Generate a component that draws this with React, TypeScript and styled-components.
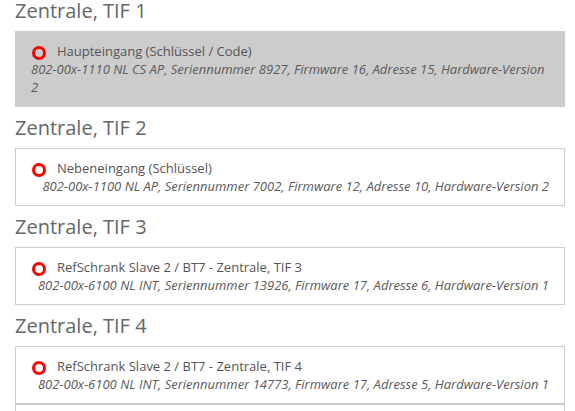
import * as React from "react";
import styled, { createGlobalStyle } from "styled-components";

const GlobalStyle = createGlobalStyle`
  html, body {
    margin: 0;
    padding: 0;
    background: #fff;
  }
  body {
    font-family: "Open Sans", "Liberation Sans", sans-serif;
    color: #555;
    overflow: hidden;
  }
`;

const Page = styled.div`
  padding: 0 10px 0 15px;
  width: 575px;
  box-sizing: border-box;
`;

const Section = styled.section`
  & + & {
    margin-top: 10px;
  }
`;

const Heading = styled.h2`
  margin: 0 0 9px;
  font-size: 20px;
  line-height: 22px;
  font-weight: 400;
  color: #666;
`;

const Card = styled.div<{ $selected?: boolean }>`
  border: 1px solid #ccc;
  background: ${(p) => (p.$selected ? "#ccc" : "#fff")};
  padding: 10px 15px;
  font-size: 13px;
  line-height: 18px;
`;

const TitleRow = styled.div`
  display: flex;
  align-items: center;
`;

const Ring = styled.span`
  flex: none;
  width: 8px;
  height: 8px;
  border: 3px solid #f00;
  border-radius: 50%;
  margin: 3px 11px 0 1px;
`;

const Title = styled.span`
  color: #555;
`;

const DescRow = styled.div`
  display: flex;
  justify-content: flex-end;
`;

const Desc = styled.span`
  font-style: italic;
  color: #5a5a5a;
`;

interface Device {
  name: string;
  info: string;
}

interface Group {
  label: string;
  devices: Device[];
}

const groups: Group[] = [
  {
    label: "Zentrale, TIF 1",
    devices: [
      {
        name: "Haupteingang (Schlüssel / Code)",
        info: "802-00x-1110 NL CS AP, Seriennummer 8927, Firmware 16, Adresse 15, Hardware-Version 2"
      }
    ]
  },
  {
    label: "Zentrale, TIF 2",
    devices: [
      {
        name: "Nebeneingang (Schlüssel)",
        info: "802-00x-1100 NL AP, Seriennummer 7002, Firmware 12, Adresse 10, Hardware-Version 2"
      }
    ]
  },
  {
    label: "Zentrale, TIF 3",
    devices: [
      {
        name: "RefSchrank Slave 2 / BT7 - Zentrale, TIF 3",
        info: "802-00x-6100 NL INT, Seriennummer 13926, Firmware 17, Adresse 6, Hardware-Version 1"
      }
    ]
  },
  {
    label: "Zentrale, TIF 4",
    devices: [
      {
        name: "RefSchrank Slave 2 / BT7 - Zentrale, TIF 4",
        info: "802-00x-6100 NL INT, Seriennummer 14773, Firmware 17, Adresse 5, Hardware-Version 1"
      },
      {
        name: "RefSchrank Slave 1 / BT6 - Zentrale, TIF 4",
        info: "802-00x-6100 NL INT, Seriennummer 14772, Firmware 17, Adresse 4, Hardware-Version 1"
      }
    ]
  }
];

export default function App() {
  return (
    <Page>
      <GlobalStyle />
      {groups.map((g, gi) => (
        <Section key={g.label}>
          <Heading>{g.label}</Heading>
          {g.devices.map((d, di) => (
            <Card key={d.name + di} $selected={gi === 0 && di === 0}>
              <TitleRow>
                <Ring />
                <Title>{d.name}</Title>
              </TitleRow>
              <DescRow>
                <Desc>{d.info}</Desc>
              </DescRow>
            </Card>
          ))}
        </Section>
      ))}
    </Page>
  );
}
